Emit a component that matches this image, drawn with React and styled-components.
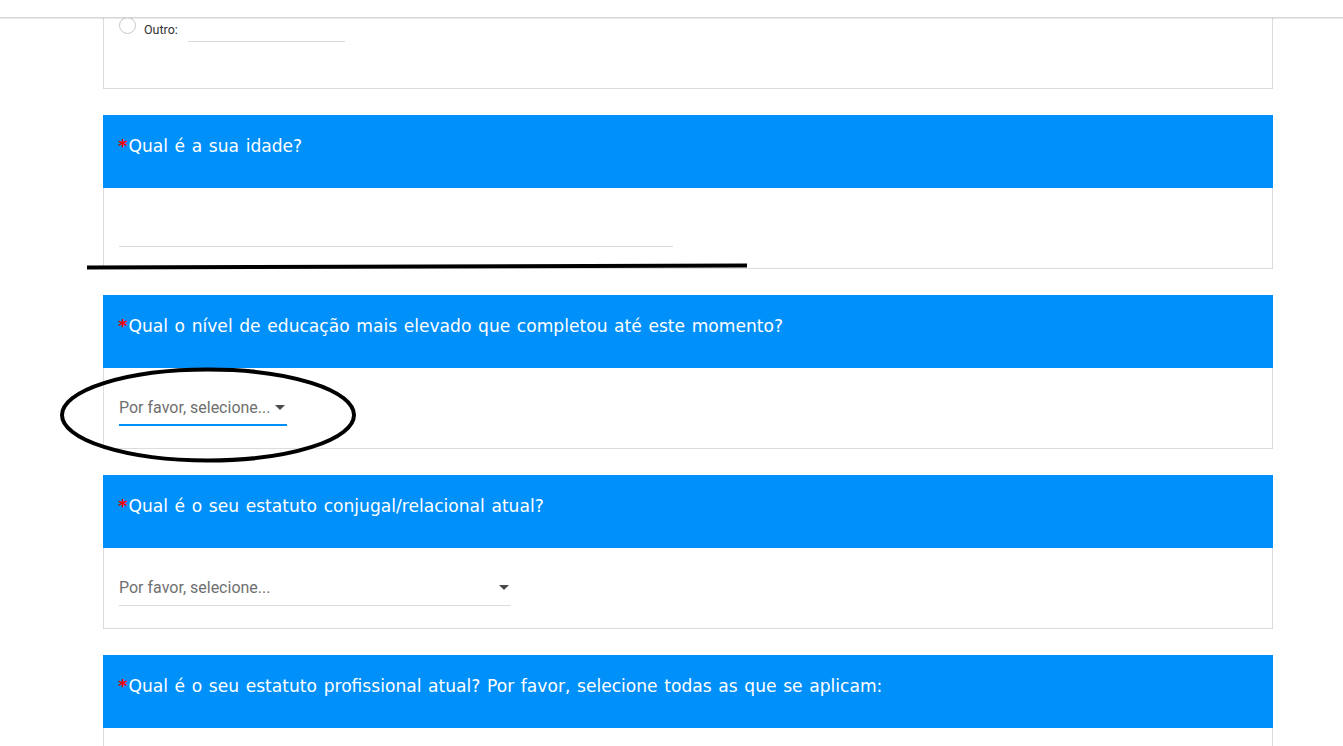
import React from "react";
import styled, { createGlobalStyle } from "styled-components";

const Global = createGlobalStyle`
  html, body { margin: 0; padding: 0; background: #fff; }
  body { font-family: Roboto, "Liberation Sans", sans-serif; overflow: hidden; }
`;

const Page = styled.div`
  position: relative;
  width: 1343px;
  height: 746px;
  overflow: hidden;
`;

const TopBar = styled.div`
  height: 17px;
  background: #fff;
  border-bottom: 1px solid #d6d6d6;
  box-shadow: 0 1px 1px rgba(0, 0, 0, 0.08);
  position: relative;
  z-index: 2;
`;

const Form = styled.div`
  margin-left: 103px;
  width: 1170px;
  display: flex;
  flex-direction: column;
  gap: 26px;
`;

const Card = styled.section`
  display: flex;
  flex-direction: column;
`;

const Header = styled.div`
  height: 73px;
  box-sizing: border-box;
  background: #0090fa;
  color: #fff;
  padding: 20px 0 0 15px;
  font-family: "DejaVu Sans", sans-serif;
  font-size: 17.1px;
  word-spacing: 1.2px;
`;

const Star = styled.span`
  color: #f50000;
  font-weight: bold;
  font-size: 18px;
  margin-right: 1px;
`;

const Body = styled.div`
  box-sizing: border-box;
  height: ${(p) => p.$h || 81}px;
  border: 1px solid #dcdcdc;
  border-top: none;
  padding: ${(p) => p.$pad || "0 15px"};
  position: relative;
`;

const OptionRow = styled.div`
  display: flex;
  align-items: center;
  height: 17px;
  gap: 8px;
  padding-left: 15px;
  margin-top: -1px;
`;

const Radio = styled.span`
  width: 17px;
  height: 17px;
  border-radius: 50%;
  border: 1px solid #c8c8c8;
  box-sizing: border-box;
`;

const OptionLabel = styled.span`
  font-size: 12.5px;
  color: #333;
  margin-top: 8px;
`;

const OtherInput = styled.span`
  width: 157px;
  height: 16px;
  border-bottom: 1px solid #d8d8d8;
  margin: 8px 0 0 2px;
  align-self: flex-start;
`;

const TextInput = styled.div`
  width: 554px;
  height: 58px;
  border-bottom: 1px solid #dcdcdc;
`;

const SelectWrap = styled.div`
  display: flex;
`;

const Select = styled.div`
  display: inline-flex;
  align-items: center;
  justify-content: space-between;
  box-sizing: border-box;
  width: ${(p) => (p.$w ? `${p.$w}px` : "auto")};
  height: 58px;
  padding-top: 23px;
  gap: 5px;
  border-bottom: ${(p) => (p.$focus ? "2px solid #0090fa" : "1px solid #dcdcdc")};
  margin-bottom: ${(p) => (p.$focus ? "-1px" : "0")};
`;

const SelectText = styled.span`
  font-size: 16px;
  color: #6f6f6f;
  line-height: 26px;
  height: 26px;
`;

const Caret = styled.span`
  width: 0;
  height: 0;
  border-left: 5px solid transparent;
  border-right: 5px solid transparent;
  border-top: 5px solid #4a4a4a;
  margin: 0 2px 1px 0;
`;

const Overlay = styled.svg`
  position: absolute;
  left: 0;
  top: 0;
  pointer-events: none;
  z-index: 3;
`;

const questions = [
  "Qual é a sua idade?",
  "Qual o nível de educação mais elevado que completou até este momento?",
  "Qual é o seu estatuto conjugal/relacional atual?",
  "Qual é o seu estatuto profissional atual? Por favor, selecione todas as que se aplicam:",
];

function Question({ text, children, h }) {
  return (
    <Card>
      <Header>
        <Star>*</Star>
        {text}
      </Header>
      <Body $h={h}>{children}</Body>
    </Card>
  );
}

export default function App() {
  return (
    <Page>
      <Global />
      <TopBar />
      <Form>
        <Card>
          <Body $h={71} $pad="0">
            <OptionRow>
              <Radio />
              <OptionLabel>Outro:</OptionLabel>
              <OtherInput />
            </OptionRow>
          </Body>
        </Card>
        <Question text={questions[0]}>
          <TextInput />
        </Question>
        <Question text={questions[1]}>
          <SelectWrap>
            <Select $focus>
              <SelectText>Por favor, selecione...</SelectText>
              <Caret />
            </Select>
          </SelectWrap>
        </Question>
        <Question text={questions[2]}>
          <SelectWrap>
            <Select $w={392}>
              <SelectText>Por favor, selecione...</SelectText>
              <Caret />
            </Select>
          </SelectWrap>
        </Question>
        <Question text={questions[3]} h={60} />
      </Form>
      <Overlay width="1343" height="746" viewBox="0 0 1343 746">
        <line x1="87" y1="267.5" x2="747" y2="265.5" stroke="#000" strokeWidth="4" />
        <ellipse cx="208" cy="415" rx="146" ry="45.5" fill="none" stroke="#000" strokeWidth="4" />
      </Overlay>
    </Page>
  );
}
